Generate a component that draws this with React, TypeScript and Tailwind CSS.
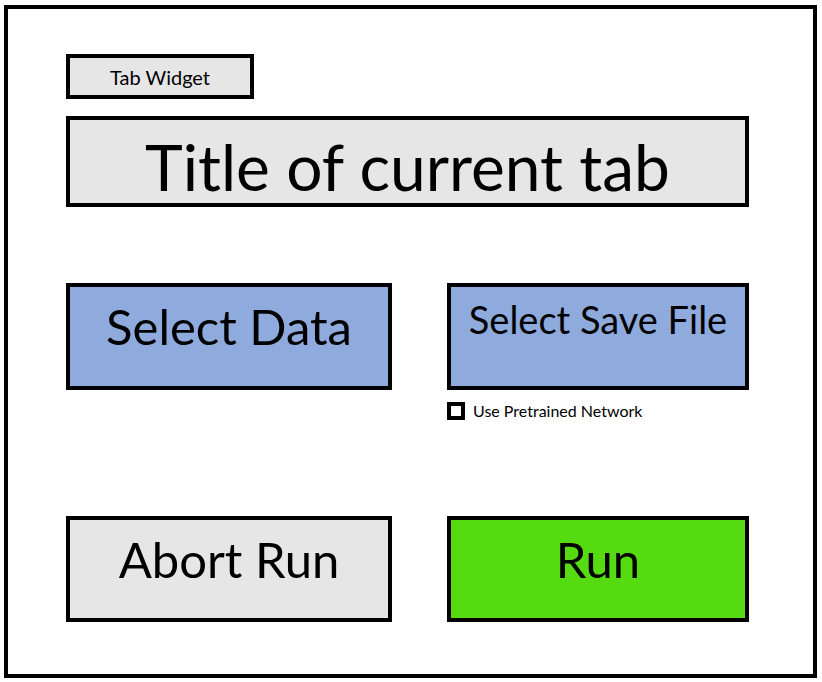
import type { ReactNode } from "react";

type ActionProps = { children: ReactNode; className: string };

function ActionButton({ children, className }: ActionProps) {
  return (
    <button
      type="button"
      className={`flex w-full justify-center border-4 border-black whitespace-nowrap ${className}`}
    >
      {children}
    </button>
  );
}

export default function App() {
  return (
    <div className="flex min-h-screen bg-white pt-[5px] pr-[5px] pb-1 pl-1 font-[Lato,sans-serif] text-black">
      <main className="w-full border-4 border-black pt-[45px] pr-16 pb-12 pl-[58px]">
        <button
          type="button"
          className="flex h-[45px] w-[188px] items-center justify-center border-4 border-black bg-[#e6e6e6] text-[20px]"
        >
          Tab Widget
        </button>

        <h1 className="mt-[17px] flex h-[91px] justify-center border-4 border-black bg-[#e6e6e6] pt-2 text-[64px] leading-[78px] whitespace-nowrap">
          Title of current tab
        </h1>

        <div className="mt-[76px] grid grid-cols-[326fr_302fr] gap-x-[55px]">
          <ActionButton className="h-[107px] bg-[#8faadc] pt-2 text-[49px] leading-[62px]">
            Select Data
          </ActionButton>
          <div>
            <ActionButton className="h-[107px] bg-[#8faadc] pt-2 text-[38px] leading-[48px]">
              Select Save File
            </ActionButton>
            <label className="mt-3 flex h-[18px] items-center gap-2 text-[16px] leading-[16px]">
              <input
                type="checkbox"
                className="size-[18px] appearance-none border-4 border-black bg-white checked:bg-black"
              />
              Use Pretrained Network
            </label>
          </div>
        </div>

        <div className="mt-24 grid grid-cols-[326fr_302fr] gap-x-[55px]">
          <ActionButton className="h-[106px] bg-[#e6e6e6] pt-2 text-[49px] leading-[62px]">
            Abort Run
          </ActionButton>
          <ActionButton className="h-[106px] bg-[#55db0f] pt-2 text-[49px] leading-[62px]">
            Run
          </ActionButton>
        </div>
      </main>
    </div>
  );
}
